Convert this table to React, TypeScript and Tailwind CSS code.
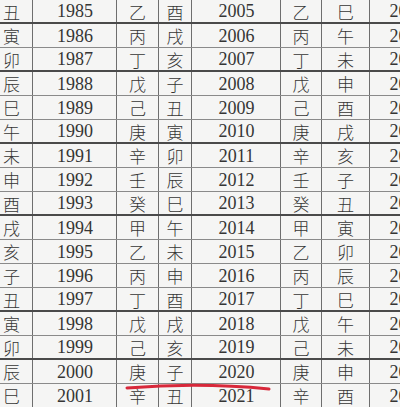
import React from "react";

const rows: string[][] = [
  ["丑", "1985", "乙", "酉", "2005", "乙", "巳", "2025"],
  ["寅", "1986", "丙", "戌", "2006", "丙", "午", "2026"],
  ["卯", "1987", "丁", "亥", "2007", "丁", "未", "2027"],
  ["辰", "1988", "戊", "子", "2008", "戊", "申", "2028"],
  ["巳", "1989", "己", "丑", "2009", "己", "酉", "2029"],
  ["午", "1990", "庚", "寅", "2010", "庚", "戌", "2030"],
  ["未", "1991", "辛", "卯", "2011", "辛", "亥", "2031"],
  ["申", "1992", "壬", "辰", "2012", "壬", "子", "2032"],
  ["酉", "1993", "癸", "巳", "2013", "癸", "丑", "2033"],
  ["戌", "1994", "甲", "午", "2014", "甲", "寅", "2034"],
  ["亥", "1995", "乙", "未", "2015", "乙", "卯", "2035"],
  ["子", "1996", "丙", "申", "2016", "丙", "辰", "2036"],
  ["丑", "1997", "丁", "酉", "2017", "丁", "巳", "2037"],
  ["寅", "1998", "戊", "戌", "2018", "戊", "午", "2038"],
  ["卯", "1999", "己", "亥", "2019", "己", "未", "2039"],
  ["辰", "2000", "庚", "子", "2020", "庚", "申", "2040"],
  ["巳", "2001", "辛", "丑", "2021", "辛", "酉", "2041"],
];

const thick = new Set([0, 2, 5, 8, 12, 14]);

const widths = [
  "w-[42px]",
  "w-[84px]",
  "w-[42px]",
  "w-[33px]",
  "w-[89px]",
  "w-[41px]",
  "w-[48px]",
  "w-[74px]",
];

const isYear = (i: number) => i === 1 || i === 4 || i === 7;

export default function App() {
  return (
    <div className="relative w-[400px] h-[407px] overflow-hidden bg-[#f5f5f4] text-[#353535]">
      <div className="flex flex-col ml-[-9px]">
        {rows.map((r, ri) => (
          <div
            key={ri}
            className={
              "flex shrink-0 " +
              (ri === rows.length - 1 ? "h-[23px] " : "h-[24px] ") +
              (thick.has(ri)
                ? "border-b-2 border-[#4a4a4a]"
                : ri === rows.length - 1
                ? ""
                : "border-b border-[#8a8a8a]")
            }
          >
            {r.map((c, ci) => (
              <div
                key={ci}
                className={
                  "shrink-0 flex items-center justify-center h-full leading-none " +
                  widths[ci] +
                  " " +
                  (ci < 7 ? "border-r border-[#6e6e6e] " : "") +
                  (isYear(ci)
                    ? "text-[18px] font-['Liberation_Serif',serif] pl-[1px]"
                    : "text-[17px] font-light font-['Noto_Sans_CJK_SC',sans-serif]")
                }
              >
                {c}
              </div>
            ))}
          </div>
        ))}
      </div>
      <svg
        className="absolute left-0 top-0"
        width="400"
        height="407"
        viewBox="0 0 400 407"
      >
        <path
          d="M127 388 Q 200 382 269 389"
          stroke="#d8283a"
          strokeWidth="3"
          fill="none"
          strokeLinecap="round"
        />
      </svg>
    </div>
  );
}
